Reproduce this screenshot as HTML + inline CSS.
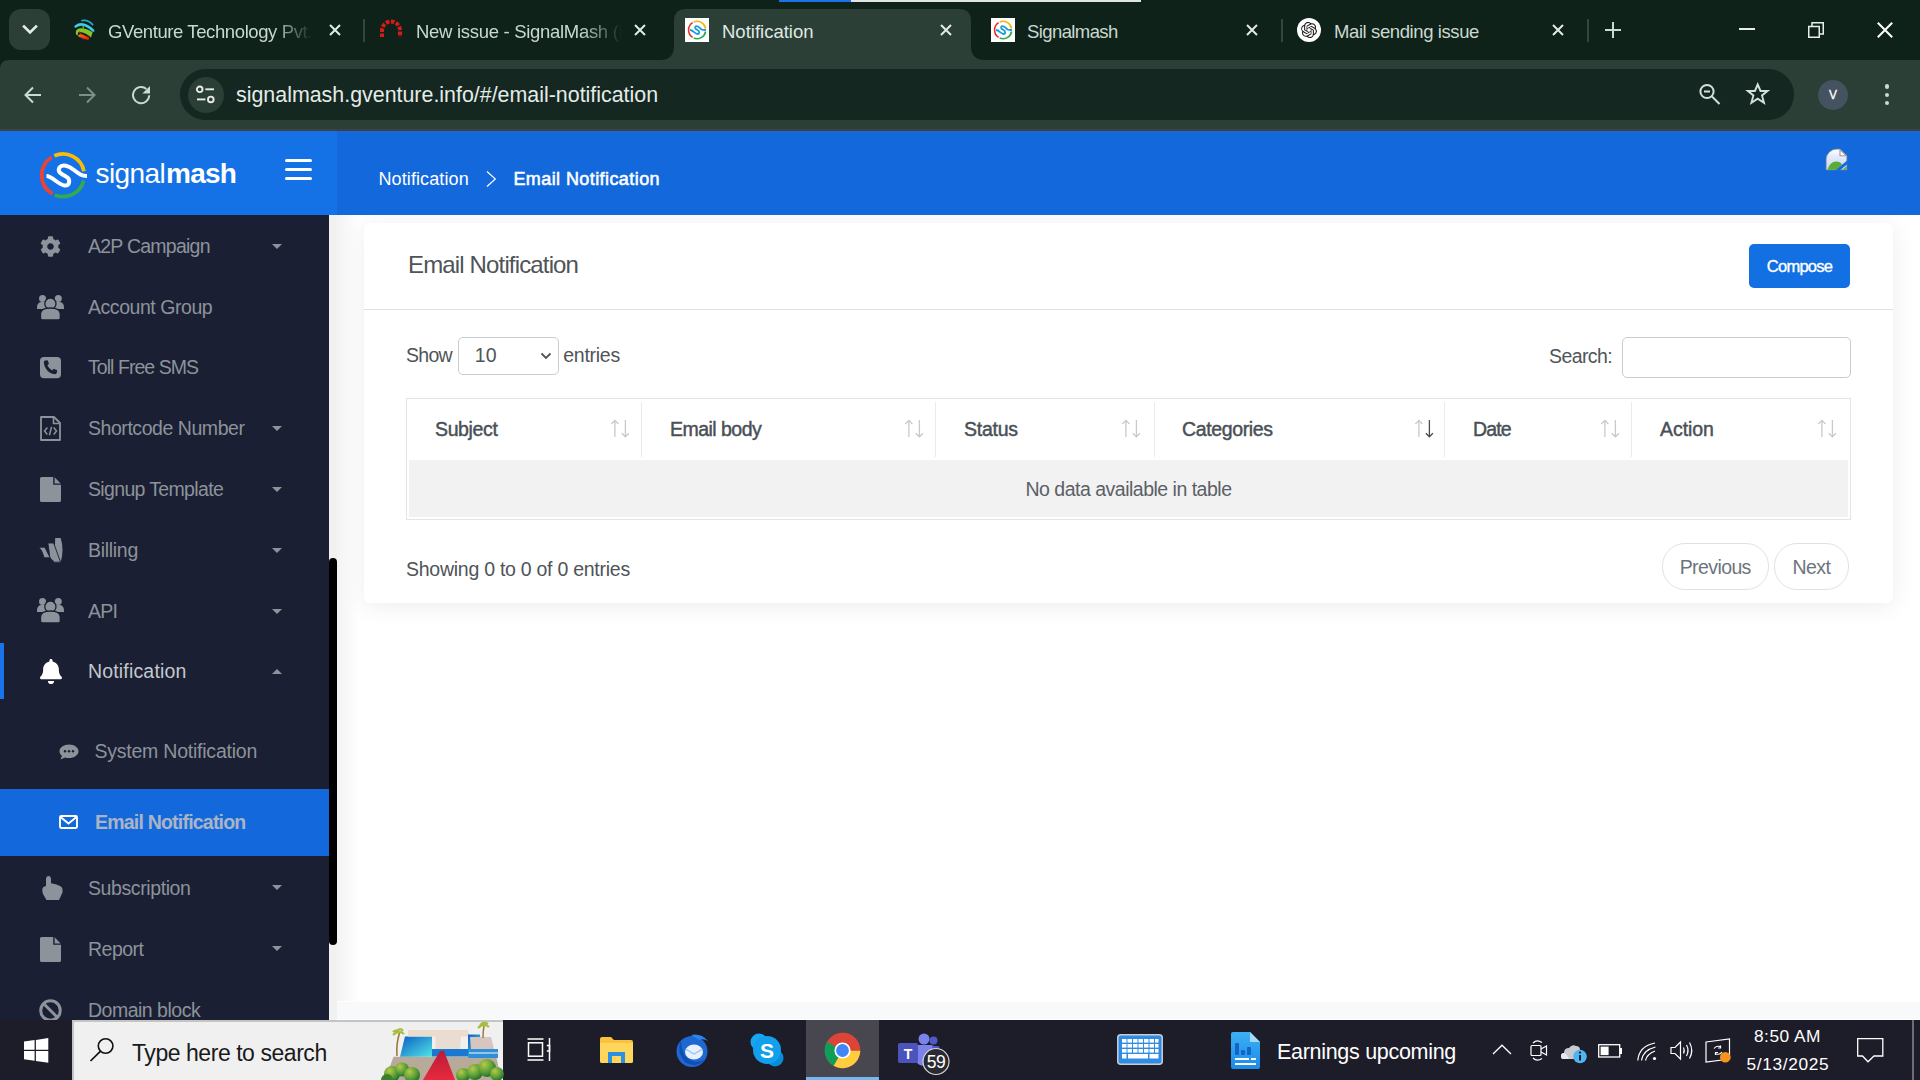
<!DOCTYPE html>
<html><head><meta charset="utf-8">
<style>
*{box-sizing:border-box;margin:0;padding:0}
html,body{width:1920px;height:1080px;overflow:hidden;background:#fff;font-family:"Liberation Sans",sans-serif}
.a{position:absolute}
.t{position:absolute;white-space:nowrap;line-height:1}
svg{position:absolute;overflow:visible}
#tabs{left:0;top:0;width:1920px;height:60px;background:#0e221a}
#toolbar{left:0;top:60px;width:1920px;height:71px;background:#2b3f37}
#hdr{left:0;top:131px;width:1920px;height:84px;background:#1368db}
#side{left:0;top:215px;width:329px;height:805px;background:#1b1f33;overflow:hidden}
#content{left:329px;top:215px;width:1591px;height:805px;background:#fff;overflow:hidden}
#task{left:0;top:1020px;width:1920px;height:60px;background:#1d1c29}
.tabtxt{font-size:18.5px;color:#dfe8e3;top:23px}
.fade{-webkit-mask-image:linear-gradient(to right,#000 80%,transparent 100%)}
.side-t{font-size:19.5px;color:#8c939a;letter-spacing:-0.6px}
.caret{width:0;height:0;border-left:5px solid transparent;border-right:5px solid transparent;border-top:5.5px solid #8c939a}
</style></head><body>
<!-- ================= TAB STRIP ================= -->
<div id="tabs" class="a">
  <div class="a" style="left:9px;top:9px;width:41px;height:41px;border-radius:12px;background:#2b3f37"></div>
  <svg style="left:0;top:0" width="60" height="60"><path d="M24 26.5 L30 32.5 L36 26.5" fill="none" stroke="#e6ede9" stroke-width="2.6" stroke-linecap="square"/></svg>
  <!-- loading bar -->
  <div class="a" style="left:779px;top:0;width:72px;height:2px;background:#1a73e8"></div>
  <div class="a" style="left:851px;top:0;width:290px;height:2px;background:#dfe5e2"></div>
  <!-- tab1 -->
  <svg style="left:70px;top:15px" width="30" height="30" viewBox="0 0 30 30">
    <defs><linearGradient id="gvo" x1="0" y1="0" x2="1" y2="0.3"><stop offset="0" stop-color="#ff7a00"/><stop offset="1" stop-color="#ff1a00"/></linearGradient></defs>
    <path d="M12 5.6 Q18 4.2 22.6 9.6" fill="none" stroke="#2aa6cf" stroke-width="1.7" stroke-linecap="round"/>
    <path d="M5.6 11.4 Q13 5.8 23.2 15.6" fill="none" stroke="#3fcbeb" stroke-width="2.5" stroke-linecap="round"/>
    <path d="M6 19.5 Q4.8 14 10 13.2 Q16 12.8 22.6 17.2 L21 22.6 Q15.5 17.6 9.5 16.8 Q7.6 17 7.8 20.5Z" fill="#84c52a"/>
    <path d="M13 10.8 L13.4 13.6" stroke="#6aa81f" stroke-width="1.4"/>
    <path d="M8 20.6 Q9.6 18.6 12.8 19.6 L19 22.4 Q19.6 24.6 17.4 24.8 Q12.5 24 8.6 21.8Z" fill="url(#gvo)"/>
    <path d="M9.4 16.4 L10.6 19" stroke="#c0392b" stroke-width="1"/>
    <path d="M10.5 22.6 L13.8 24.8" stroke="#1f2c8c" stroke-width="1.1"/>
  </svg>
  <div class="t tabtxt fade" style="color:#cad8d0;left:108px;width:205px;overflow:hidden;letter-spacing:-0.4px">GVenture Technology Pvt. Ltd.</div>
  <svg style="left:329px;top:24px" width="12" height="12"><path d="M1 1L11 11M11 1L1 11" stroke="#e2eae6" stroke-width="2"/></svg>
  <div class="a" style="left:363px;top:18.5px;width:2px;height:23px;background:#33463e"></div>
  <!-- tab2 -->
  <svg style="left:379px;top:19px" width="24" height="18" viewBox="0 0 24 18">
    <path d="M3 18 V11.5 A9 9 0 0 1 21 11.5 V18" fill="none" stroke="#d41c1c" stroke-width="4" stroke-dasharray="3.6 1.5"/>
  </svg>
  <div class="t tabtxt fade" style="color:#cad8d0;left:416px;width:206px;overflow:hidden;letter-spacing:-0.3px">New issue - SignalMash (Redmine)</div>
  <svg style="left:634px;top:24px" width="12" height="12"><path d="M1 1L11 11M11 1L1 11" stroke="#e2eae6" stroke-width="2"/></svg>
  <!-- active tab -->
  <svg style="left:660px;top:9px" width="325" height="52" viewBox="0 0 325 52">
    <path d="M0 51 Q14 51 14 37 L14 12 Q14 0 26 0 L299 0 Q311 0 311 12 L311 37 Q311 51 325 51 Z" fill="#2b3f37"/>
  </svg>
  <svg style="left:685px;top:18px" width="24" height="24" viewBox="0 0 24 24">
    <rect width="24" height="24" fill="#fff"/>
    <path d="M7.6 4.6 A8.8 8.8 0 0 0 7.6 19.4" fill="none" stroke="#e5332a" stroke-width="1.6"/>
    <path d="M8.7 3.9 A8.8 8.8 0 0 1 20.6 10.5" fill="none" stroke="#f4b400" stroke-width="1.6"/>
    <path d="M20.6 13.5 A8.8 8.8 0 0 1 8.7 20.1" fill="none" stroke="#2da94f" stroke-width="1.6"/>
    <path d="M5 12 C8 12 10 16 12.5 16 C15 16 14.5 13 12.5 12 C10.5 11 9.5 10 10.5 8.5 C12 7 15 10 16.5 11.5 C17.5 12 19 12 21 12" fill="none" stroke="#1a9be0" stroke-width="1.8"/>
  </svg>
  <div class="t tabtxt" style="left:722px">Notification</div>
  <svg style="left:940px;top:24px" width="12" height="12"><path d="M1 1L11 11M11 1L1 11" stroke="#e2eae6" stroke-width="2"/></svg>
  <!-- tab4 -->
  <svg style="left:991px;top:18px" width="24" height="24" viewBox="0 0 24 24">
    <rect width="24" height="24" fill="#fff"/>
    <path d="M7.6 4.6 A8.8 8.8 0 0 0 7.6 19.4" fill="none" stroke="#e5332a" stroke-width="1.6"/>
    <path d="M8.7 3.9 A8.8 8.8 0 0 1 20.6 10.5" fill="none" stroke="#f4b400" stroke-width="1.6"/>
    <path d="M20.6 13.5 A8.8 8.8 0 0 1 8.7 20.1" fill="none" stroke="#2da94f" stroke-width="1.6"/>
    <path d="M5 12 C8 12 10 16 12.5 16 C15 16 14.5 13 12.5 12 C10.5 11 9.5 10 10.5 8.5 C12 7 15 10 16.5 11.5 C17.5 12 19 12 21 12" fill="none" stroke="#1a9be0" stroke-width="1.8"/>
  </svg>
  <div class="t tabtxt" style="color:#cad8d0;left:1027px;letter-spacing:-0.6px">Signalmash</div>
  <svg style="left:1246px;top:24px" width="12" height="12"><path d="M1 1L11 11M11 1L1 11" stroke="#e2eae6" stroke-width="2"/></svg>
  <div class="a" style="left:1281px;top:18.5px;width:2px;height:23px;background:#33463e"></div>
  <!-- tab5 -->
  <div class="a" style="left:1297px;top:18px;width:24px;height:24px;border-radius:50%;background:#fff"></div>
  <svg style="left:1301px;top:22px" width="16" height="16" viewBox="0 0 24 24"><path fill="#1a1a1a" d="M22.2819 9.8211a5.9847 5.9847 0 0 0-.5157-4.9108 6.0462 6.0462 0 0 0-6.5098-2.9A6.0651 6.0651 0 0 0 4.9807 4.1818a5.9847 5.9847 0 0 0-3.9977 2.9 6.0462 6.0462 0 0 0 .7427 7.0966 5.98 5.98 0 0 0 .511 4.9107 6.051 6.051 0 0 0 6.5146 2.9001A5.9847 5.9847 0 0 0 13.2599 24a6.0557 6.0557 0 0 0 5.7718-4.2058 5.9894 5.9894 0 0 0 3.9977-2.9001 6.0557 6.0557 0 0 0-.7475-7.0729zm-9.022 12.6081a4.4755 4.4755 0 0 1-2.8764-1.0408l.1419-.0804 4.7783-2.7582a.7948.7948 0 0 0 .3927-.6813v-6.7369l2.02 1.1686a.071.071 0 0 1 .038.052v5.5826a4.504 4.504 0 0 1-4.4945 4.4944zm-9.6607-4.1254a4.4708 4.4708 0 0 1-.5346-3.0137l.142.0852 4.783 2.7582a.7712.7712 0 0 0 .7806 0l5.8428-3.3685v2.3324a.0804.0804 0 0 1-.0332.0615L9.74 19.9502a4.4992 4.4992 0 0 1-6.1408-1.6464zM2.3408 7.8956a4.485 4.485 0 0 1 2.3655-1.9728V11.6a.7664.7664 0 0 0 .3879.6765l5.8144 3.3543-2.0201 1.1685a.0757.0757 0 0 1-.071 0l-4.8303-2.7865A4.504 4.504 0 0 1 2.3408 7.872zm16.5963 3.8558L13.1038 8.364 15.1192 7.2a.0757.0757 0 0 1 .071 0l4.8303 2.7913a4.4944 4.4944 0 0 1-.6765 8.1042v-5.6772a.79.79 0 0 0-.407-.667zm2.0107-3.0231l-.142-.0852-4.7735-2.7818a.7759.7759 0 0 0-.7854 0L9.409 9.2297V6.8974a.0662.0662 0 0 1 .0284-.0615l4.8303-2.7866a4.4992 4.4992 0 0 1 6.6802 4.66zM8.3065 12.863l-2.02-1.1638a.0804.0804 0 0 1-.038-.0567V6.0742a4.4992 4.4992 0 0 1 7.3757-3.4537l-.142.0805L8.704 5.459a.7948.7948 0 0 0-.3927.6813zm1.0976-2.3654l2.602-1.4998 2.6069 1.4998v2.9994l-2.5974 1.4997-2.6067-1.4997Z"/></svg>
  <div class="t tabtxt" style="color:#cad8d0;left:1334px;letter-spacing:-0.4px">Mail sending issue</div>
  <svg style="left:1552px;top:24px" width="12" height="12"><path d="M1 1L11 11M11 1L1 11" stroke="#e2eae6" stroke-width="2"/></svg>
  <div class="a" style="left:1587px;top:18.5px;width:2px;height:23px;background:#33463e"></div>
  <svg style="left:1605px;top:22px" width="16" height="16"><path d="M8 0V16M0 8H16" stroke="#c8dccf" stroke-width="2"/></svg>
  <!-- window controls -->
  <div class="a" style="left:1739px;top:28px;width:16px;height:2px;background:#e8efeb"></div>
  <svg style="left:1808px;top:22px" width="16" height="16"><path d="M0.75 4.5H11.25V15.25H0.75Z M4 4.5V0.75H15.25V12H11.25" fill="none" stroke="#e8efeb" stroke-width="1.5"/></svg>
  <svg style="left:1877px;top:22px" width="16" height="16"><path d="M0.8 0.8L15.2 15.2M15.2 0.8L0.8 15.2" stroke="#fff" stroke-width="2"/></svg>
</div>
<!-- ================= TOOLBAR ================= -->
<div id="toolbar" class="a"><svg style="left:0;top:0" width="10" height="10"><path d="M0 0H9Q0 0 0 9Z" fill="#0e221a"/></svg>
  <svg style="left:24px;top:26px" width="18" height="18" viewBox="0 0 18 18"><path d="M17 9H2M9 1.5L1.5 9L9 16.5" fill="none" stroke="#c8dcd0" stroke-width="2"/></svg>
  <svg style="left:78px;top:26px" width="18" height="18" viewBox="0 0 18 18"><path d="M1 9H16M9 1.5L16.5 9L9 16.5" fill="none" stroke="#7d8f86" stroke-width="2"/></svg>
  <svg style="left:132px;top:26px" width="19" height="19" viewBox="0 0 19 19"><path d="M17.2 9.2A8.1 8.1 0 1 1 14.4 3" fill="none" stroke="#c8dcd0" stroke-width="1.9"/><path d="M18 0V7.6H10.4Z" fill="#c8dcd0"/></svg>
  <div class="a" style="left:180px;top:9px;width:1614px;height:51px;border-radius:25.5px;background:#142720"></div>
  <div class="a" style="left:187.5px;top:16.5px;width:36px;height:36px;border-radius:50%;background:#2b3f37"></div>
  <svg style="left:196px;top:25px" width="20" height="20" viewBox="0 0 20 20"><g fill="none" stroke="#e6ece9" stroke-width="1.9"><circle cx="3.7" cy="4.3" r="2.8"/><path d="M9.4 4.3H18"/><path d="M1 14.4H9.4"/><circle cx="14.8" cy="14.4" r="2.8"/></g></svg>
  <div class="t" style="left:236px;top:25.3px;font-size:21.4px;color:#e4ece8">signalmash.gventure.info/#/email-notification</div>
  <svg style="left:1699px;top:23px" width="22" height="22" viewBox="0 0 22 22"><g fill="none" stroke="#d6e0da" stroke-width="2"><circle cx="8" cy="8.5" r="6.6"/><path d="M13 13.5L20.5 21"/><path d="M5 8.5H11"/></g></svg>
  <svg style="left:1746px;top:23px" width="24" height="22" viewBox="0 0 24 22"><path d="M11.7 1.5L14.5 8H21.5L16 12.4L18 19.8L11.7 15.7L5.4 19.8L7.4 12.4L1.9 8H8.9Z" fill="none" stroke="#d6e0da" stroke-width="1.9" stroke-linejoin="miter"/></svg>
  <div class="a" style="left:1818px;top:20px;width:30px;height:30px;border-radius:50%;background:#44535f"></div>
  <div class="t" style="left:1826px;top:29.2px;font-size:12px;color:#fff;width:14px;text-align:center;-webkit-text-stroke:0.3px #fff">V</div>
  <div class="a" style="left:1884.7px;top:24.3px;width:4.6px;height:4.6px;border-radius:50%;background:#c5dccf"></div>
  <div class="a" style="left:1884.7px;top:32.7px;width:4.6px;height:4.6px;border-radius:50%;background:#c5dccf"></div>
  <div class="a" style="left:1884.7px;top:40.7px;width:4.6px;height:4.6px;border-radius:50%;background:#c5dccf"></div>
  <div class="a" style="left:0;top:69px;width:1920px;height:2px;background:#3c423f"></div>
</div>
<div id="hdr" class="a">
  <div class="a" style="left:0;top:0;width:337px;height:84px;background:#1572e6"></div>
  <svg style="left:36px;top:148px;top:17px" width="56" height="56" viewBox="0 0 56 56">
    <path d="M15.7 9.24 A21.3 21.3 0 0 0 16.67 45.93" fill="none" stroke="#ea4335" stroke-width="3.8"/>
    <path d="M18.34 7.84 A21.3 21.3 0 0 1 47.91 23.24" fill="none" stroke="#fbbc05" stroke-width="3.8"/>
    <path d="M47.67 32.45 A21.3 21.3 0 0 1 18.68 46.91" fill="none" stroke="#34a853" stroke-width="3.8"/>
    <path d="M10.5 28 C16 28 22 36.5 28.5 37.5 C34 38.5 35 31 30 28.5 C25 26 21 23.5 23.5 19.5 C26.5 15.5 33 18 38 22 C43 26 45.5 28 51 28" fill="none" stroke="#fff" stroke-width="4"/>
  </svg>
  <div class="t" style="left:95.5px;top:29.4px;font-size:28px;color:#fff;letter-spacing:-0.6px">signal<b style="font-weight:bold;letter-spacing:-0.75px;margin-left:1px">mash</b></div>
  <div class="a" style="left:285px;top:27.5px;width:27px;height:3px;border-radius:2px;background:#fff"></div>
  <div class="a" style="left:285px;top:36.5px;width:27px;height:3px;border-radius:2px;background:#fff"></div>
  <div class="a" style="left:285px;top:45.5px;width:27px;height:3px;border-radius:2px;background:#fff"></div>
  <div class="t" style="left:378.5px;top:38.5px;font-size:18px;color:#fff;letter-spacing:0.1px">Notification</div>
  <svg style="left:486px;top:40px" width="11" height="17"><path d="M1 0.5L9.3 8L1 15.5" fill="none" stroke="#fff" stroke-width="1.2"/></svg>
  <div class="t" style="left:513.4px;top:38.5px;font-size:18px;color:#fff;-webkit-text-stroke:0.55px #fff;letter-spacing:0.42px">Email Notification</div>
  <svg style="left:1826px;top:18.2px" width="21" height="21" viewBox="0 0 21 21">
    <defs><linearGradient id="bim" x1="0" y1="0" x2="0" y2="1"><stop offset="0" stop-color="#ffffff"/><stop offset="0.35" stop-color="#e4ecfb"/><stop offset="1" stop-color="#c5d4ee"/></linearGradient></defs>
    <path d="M0.3 20.7V10.5A10.2 10.2 0 0 1 10.5 0.3H14L20.7 7V20.7Z" fill="url(#bim)" stroke="#b9a98f" stroke-width="0.6"/>
    <path d="M14 0.5V6.8H20.5Z" fill="#fdfdfd" stroke="#9a9a9a" stroke-width="1.1"/>
    <path d="M1.5 20.7Q4 12.8 10 12.6Q14.5 12.6 16 15.5L10.5 20.7Z" fill="#5aac36"/>
    <path d="M16.4 20.7L20.7 17V20.7Z" fill="#6aa84f"/>
    <path d="M9.5 21.2L21.2 11.6V15.2L14 21.2Z" fill="#1368db"/>
  </svg>
</div>
<div id="side" class="a"><svg style="left:40px;top:21px" width="21" height="21" viewBox="0 0 512 512"><path fill="#8c939a" d="M487.4 315.7l-42.6-24.6c4.3-23.2 4.3-47 0-70.2l42.6-24.6c4.9-2.8 7.1-8.6 5.5-14-11.1-35.6-30-67.8-54.7-94.6-3.8-4.1-10-5.1-14.8-2.3L380.8 110c-17.9-15.4-38.5-27.3-60.8-35.1V25.8c0-5.6-3.9-10.5-9.4-11.7-36.7-8.2-74.3-7.8-109.2 0-5.5 1.2-9.4 6.1-9.4 11.7V75c-22.2 7.9-42.8 19.8-60.8 35.1L88.7 85.5c-4.9-2.8-11-1.9-14.8 2.3-24.7 26.7-43.6 58.9-54.7 94.6-1.7 5.4.6 11.2 5.5 14L67.3 221c-4.3 23.2-4.3 47 0 70.2l-42.6 24.6c-4.9 2.8-7.1 8.6-5.5 14 11.1 35.6 30 67.8 54.7 94.6 3.8 4.1 10 5.1 14.8 2.3l42.6-24.6c17.9 15.4 38.5 27.3 60.8 35.1v49.2c0 5.6 3.9 10.5 9.4 11.7 36.7 8.2 74.3 7.8 109.2 0 5.5-1.2 9.4-6.1 9.4-11.7v-49.2c22.2-7.9 42.8-19.8 60.8-35.1l42.6 24.6c4.9 2.8 11 1.9 14.8-2.3 24.7-26.7 43.6-58.9 54.7-94.6 1.5-5.5-.7-11.3-5.6-14.1zM256 336c-44.1 0-80-35.9-80-80s35.9-80 80-80 80 35.9 80 80-35.9 80-80 80z"/></svg><div class="t side-t" style="left:88px;top:22.29px;font-size:19.5px;letter-spacing:-0.75px">A2P Campaign</div><div class="a caret" style="left:272px;top:28.5px"></div><svg style="left:37px;top:80px" width="27" height="25" viewBox="0 0 27 25">
<circle cx="5.5" cy="3.5" r="3.5" fill="#8c939a"/><circle cx="21.3" cy="3.5" r="3.5" fill="#8c939a"/>
<path d="M0 12.5Q0 7 5 7H7Q11 7 11 12.5V14H0Z" fill="#8c939a"/><path d="M16 12.5Q16 7 20 7H22Q27 7 27 12.5V14H16Z" fill="#8c939a"/>
<circle cx="13.4" cy="8.7" r="5.6" fill="#8c939a" stroke="#1b1f33" stroke-width="1.3"/>
<path d="M3.5 19Q3.5 13 13.4 13Q23.3 13 23.3 19V23Q23.3 25 21.3 25H5.5Q3.5 25 3.5 23Z" fill="#8c939a" stroke="#1b1f33" stroke-width="1.3"/></svg><div class="t side-t" style="left:88px;top:83.29px;font-size:19.5px;letter-spacing:-0.45px">Account Group</div><svg style="left:40px;top:141.7px" width="21" height="21.3" viewBox="0 0 21 21.3"><rect x="0" y="0" width="21" height="21.3" rx="4" fill="#8c939a"/><path d="M5.2 3.6L7.6 3.2L9 6.8L7.4 8.2Q8.6 11.4 12.2 13.4L13.6 11.8L17.2 13.2L16.8 15.8Q16.5 17.2 15 17.2Q9 16.8 5.5 11Q3.8 8 3.8 5Q3.8 3.9 5.2 3.6Z" fill="#1b1f33"/></svg><div class="t side-t" style="left:88px;top:142.99px;font-size:19.5px;letter-spacing:-0.95px">Toll Free SMS</div><svg style="left:40px;top:201.3px" width="21" height="25" viewBox="0 0 21 25"><path d="M1 1H14L20 7V24H1Z" fill="none" stroke="#8c939a" stroke-width="1.8" stroke-linejoin="round"/><path d="M13.5 1.5V7.5H19.5" fill="none" stroke="#8c939a" stroke-width="1.6"/><path d="M7.3 11.5L4.5 15L7.3 18.5M13.7 11.5L16.5 15L13.7 18.5M11.6 10.8L9.4 19.2" fill="none" stroke="#8c939a" stroke-width="1.5"/></svg><div class="t side-t" style="left:88px;top:204.19px;font-size:19.5px;letter-spacing:-0.45px">Shortcode Number</div><div class="a caret" style="left:272px;top:210.8px"></div><svg style="left:40px;top:262px" width="21" height="25" viewBox="0 0 21 25"><path d="M1.5 0H13.2V7.8H21V23.5Q21 25 19.5 25H1.5Q0 25 0 23.5V1.5Q0 0 1.5 0Z" fill="#8c939a"/><path d="M14.6 0.3L20.7 6.4H14.6Z" fill="#8c939a"/></svg><div class="t side-t" style="left:88px;top:265.19px;font-size:19.5px;letter-spacing:-0.65px">Signup Template</div><div class="a caret" style="left:272px;top:271.8px"></div><svg style="left:38px;top:537px;top:322px" width="27" height="27" viewBox="0 0 27 27">
<path d="M17.2 1L22.7 1Q26.3 13 22.7 25.2L16.4 25.2Z" fill="#8c939a"/>
<path d="M9.8 6L15.7 6L22.5 25.2L16.5 25.2L11.8 20.8Q11 12 9.8 6Z" fill="#8c939a" stroke="#1b1f33" stroke-width="0.9"/>
<path d="M0.9 10.2L6.8 10.2L12.2 20.8L6.2 20.8Q4 13 0.9 10.2Z" fill="#8c939a" stroke="#1b1f33" stroke-width="0.9"/></svg><div class="t side-t" style="left:88px;top:326.39px;font-size:19.5px;letter-spacing:-0.3px">Billing</div><div class="a caret" style="left:272px;top:332.9px"></div><svg style="left:37px;top:382.7px" width="27" height="25" viewBox="0 0 27 25">
<circle cx="5.5" cy="3.5" r="3.5" fill="#8c939a"/><circle cx="21.3" cy="3.5" r="3.5" fill="#8c939a"/>
<path d="M0 12.5Q0 7 5 7H7Q11 7 11 12.5V14H0Z" fill="#8c939a"/><path d="M16 12.5Q16 7 20 7H22Q27 7 27 12.5V14H16Z" fill="#8c939a"/>
<circle cx="13.4" cy="8.7" r="5.6" fill="#8c939a" stroke="#1b1f33" stroke-width="1.3"/>
<path d="M3.5 19Q3.5 13 13.4 13Q23.3 13 23.3 19V23Q23.3 25 21.3 25H5.5Q3.5 25 3.5 23Z" fill="#8c939a" stroke="#1b1f33" stroke-width="1.3"/></svg><div class="t side-t" style="left:88px;top:386.99px;font-size:19.5px;letter-spacing:-0.8px">API</div><div class="a caret" style="left:272px;top:393.5px"></div><div class="a" style="left:0;top:428px;width:4px;height:56px;background:#1a73e8"></div><svg style="left:40px;top:443.7px" width="22" height="25" viewBox="0 0 448 512" preserveAspectRatio="none"><path fill="#fff" d="M224 512c35.32 0 63.97-28.65 63.97-64H160.03c0 35.35 28.65 64 63.97 64zm215.39-149.71c-19.32-20.76-55.47-51.99-55.47-154.29 0-77.7-54.48-139.9-127.94-155.16V32c0-17.67-14.32-32-31.98-32s-31.98 14.33-31.98 32v20.84C118.56 68.1 64.08 130.3 64.08 208c0 102.3-36.15 133.53-55.47 154.29-6 6.45-8.66 14.16-8.61 21.71.11 16.4 12.98 32 32.1 32h383.8c19.12 0 32-15.6 32.1-32 .05-7.55-2.61-15.27-8.61-21.71z"/></svg><div class="t side-t" style="left:88px;top:447.29px;font-size:19.5px;color:#c4c7cd;letter-spacing:0.17px">Notification</div><div class="a caret" style="left:272px;top:453.5px;border-top:none;border-bottom:5.5px solid #8c939a"></div><svg style="left:58.5px;top:528.5px" width="20" height="16" viewBox="0 0 20 16"><path d="M10 0.5C4.8 0.5 0.5 3.5 0.5 7.2c0 1.8 1 3.4 2.5 4.6L1.5 15.5 6 13.4c1.2 .4 2.6 .6 4 .6 5.2 0 9.5-3 9.5-6.8S15.2 0.5 10 0.5z" fill="#8c939a"/><circle cx="6" cy="7.2" r="1.2" fill="#1b1f33"/><circle cx="10" cy="7.2" r="1.2" fill="#1b1f33"/><circle cx="14" cy="7.2" r="1.2" fill="#1b1f33"/></svg><div class="t side-t" style="left:94.5px;top:527.29px;font-size:19.5px;letter-spacing:-0.23px">System Notification</div><div class="a" style="left:0;top:574px;width:329px;height:67px;background:#1369db"></div><svg style="left:59px;top:600px" width="19" height="14" viewBox="0 0 19 14"><rect x="1" y="1" width="17" height="12" rx="1.2" fill="none" stroke="#fff" stroke-width="1.9"/><path d="M1.5 2L9.5 8.5L17.5 2" fill="none" stroke="#fff" stroke-width="1.9"/></svg><div class="t side-t" style="left:95px;top:597.89px;font-size:19.5px;font-weight:bold;color:#abb4c6;letter-spacing:-0.79px">Email Notification</div><svg style="left:42px;top:660px" width="21" height="26" viewBox="0 0 21 26"><path d="M4 4.5Q4 1 6.5 1Q9 1 9 4.5V8.3Q14 9 17.5 10.8Q20.5 12 20.5 14.8V17.5L17 25H4.5L1 19Q0.3 17.5 0.3 14.8Q0.3 11.5 4 11Z" fill="#8c939a"/></svg><div class="t side-t" style="left:88px;top:664.09px;font-size:19.5px;letter-spacing:-0.4px">Subscription</div><div class="a caret" style="left:272px;top:670.1px"></div><svg style="left:40px;top:722px" width="21" height="25" viewBox="0 0 21 25"><path d="M1.5 0H13.2V7.8H21V23.5Q21 25 19.5 25H1.5Q0 25 0 23.5V1.5Q0 0 1.5 0Z" fill="#8c939a"/><path d="M14.6 0.3L20.7 6.4H14.6Z" fill="#8c939a"/></svg><div class="t side-t" style="left:88px;top:725.29px;font-size:19.5px;letter-spacing:-0.5px">Report</div><div class="a caret" style="left:272px;top:730.5px"></div><svg style="left:39px;top:783.5px" width="23" height="23" viewBox="0 0 23 23"><circle cx="11.5" cy="11.5" r="9.8" fill="none" stroke="#8c939a" stroke-width="3"/><path d="M4.5 4.5L18.5 18.5" stroke="#8c939a" stroke-width="3"/></svg><div class="t side-t" style="left:88px;top:785.99px;font-size:19.5px;letter-spacing:-0.5px">Domain block</div></div>
<div id="content" class="a"><div class="a" style="left:0;top:0;width:8px;height:805px;background:#f1f1f1"></div><div class="a" style="left:8px;top:0;width:22px;height:786px;background:linear-gradient(to right,#f3f3f3,rgba(255,255,255,0))"></div><div class="a" style="left:0;top:343px;width:8px;height:387px;border-radius:4px;background:#000"></div><div class="a" style="left:8px;top:786.5px;width:1583px;height:17.5px;background:#f8f9fb"></div><div class="a" style="left:35px;top:8px;width:1529px;height:380px;background:#fff;border-radius:6px;box-shadow:0 3px 24px rgba(0,0,0,0.075)"></div><div class="t" style="left:79px;top:37.5px;font-size:24px;color:#4f5458;letter-spacing:-0.85px">Email Notification</div><div class="a" style="left:1420px;top:29px;width:101px;height:43.5px;border-radius:5px;background:#1370e3"></div><div class="t" style="left:1420px;top:42.5px;width:101px;text-align:center;font-size:16.5px;color:#fff;-webkit-text-stroke:0.35px #fff;letter-spacing:-0.75px">Compose</div><div class="a" style="left:35px;top:94px;width:1529px;height:1px;background:#dfe0e2"></div><div class="t" style="left:77px;top:130.7px;font-size:19.5px;color:#4f5458;letter-spacing:-0.7px">Show</div><div class="a" style="left:129px;top:122px;width:101px;height:38px;border:1.5px solid #c9cbce;border-radius:5px;background:#fff"></div><div class="t" style="left:145.8px;top:131.2px;font-size:19.5px;color:#4f5458">10</div><svg style="left:211px;top:137px" width="12" height="8"><path d="M1.5 1.5L6 6L10.5 1.5" fill="none" stroke="#4f5458" stroke-width="1.8"/></svg><div class="t" style="left:234.3px;top:130.7px;font-size:19.5px;color:#4f5458;letter-spacing:-0.28px">entries</div><div class="t" style="left:1220px;top:132px;font-size:19.5px;color:#4f5458;letter-spacing:-0.6px">Search:</div><div class="a" style="left:1293px;top:122px;width:229px;height:41px;border:1.5px solid #c9cbce;border-radius:5px;background:#fff"></div><div class="a" style="left:77px;top:183px;width:1445px;height:122px;border:1.5px solid #e3e4e6;background:#fff"></div><div class="a" style="left:80px;top:245px;width:1439px;height:57px;background:#f2f2f2"></div><div class="a" style="left:312px;top:187px;width:1.2px;height:55px;background:#e9ebee"></div><div class="a" style="left:606px;top:187px;width:1.2px;height:55px;background:#e9ebee"></div><div class="a" style="left:824.5px;top:187px;width:1.2px;height:55px;background:#e9ebee"></div><div class="a" style="left:1115px;top:187px;width:1.2px;height:55px;background:#e9ebee"></div><div class="a" style="left:1302px;top:187px;width:1.2px;height:55px;background:#e9ebee"></div><div class="t" style="left:106px;top:204.8px;font-size:19.5px;color:#495057;-webkit-text-stroke:0.45px #495057;letter-spacing:-0.37px">Subject</div><div class="t" style="left:341px;top:204.8px;font-size:19.5px;color:#495057;-webkit-text-stroke:0.45px #495057;letter-spacing:-0.53px">Email body</div><div class="t" style="left:635px;top:204.8px;font-size:19.5px;color:#495057;-webkit-text-stroke:0.45px #495057;letter-spacing:-0.26px">Status</div><div class="t" style="left:853px;top:204.8px;font-size:19.5px;color:#495057;-webkit-text-stroke:0.45px #495057;letter-spacing:-0.36px">Categories</div><div class="t" style="left:1144px;top:204.8px;font-size:19.5px;color:#495057;-webkit-text-stroke:0.45px #495057;letter-spacing:-0.83px">Date</div><div class="t" style="left:1331px;top:204.8px;font-size:19.5px;color:#495057;-webkit-text-stroke:0.45px #495057;letter-spacing:-0.06px">Action</div><svg style="left:282.0px;top:204px" width="20" height="20" viewBox="0 0 20 20"><path d="M3.9 1.6V18M0.4 5L3.9 1.4L7.4 5" fill="none" stroke="#c6c9cd" stroke-width="1.3"/><path d="M14.4 1V17.6M10.9 14.2L14.4 17.8L17.9 14.2" fill="none" stroke="#c6c9cd" stroke-width="1.3"/></svg><svg style="left:576.0px;top:204px" width="20" height="20" viewBox="0 0 20 20"><path d="M3.9 1.6V18M0.4 5L3.9 1.4L7.4 5" fill="none" stroke="#c6c9cd" stroke-width="1.3"/><path d="M14.4 1V17.6M10.9 14.2L14.4 17.8L17.9 14.2" fill="none" stroke="#c6c9cd" stroke-width="1.3"/></svg><svg style="left:793.0px;top:204px" width="20" height="20" viewBox="0 0 20 20"><path d="M3.9 1.6V18M0.4 5L3.9 1.4L7.4 5" fill="none" stroke="#c6c9cd" stroke-width="1.3"/><path d="M14.4 1V17.6M10.9 14.2L14.4 17.8L17.9 14.2" fill="none" stroke="#c6c9cd" stroke-width="1.3"/></svg><svg style="left:1086.0px;top:204px" width="20" height="20" viewBox="0 0 20 20"><path d="M3.9 1.6V18M0.4 5L3.9 1.4L7.4 5" fill="none" stroke="#c6c9cd" stroke-width="1.3"/><path d="M14.4 1V17.6M10.9 14.2L14.4 17.8L17.9 14.2" fill="none" stroke="#4a4d52" stroke-width="1.3"/></svg><svg style="left:1272.0px;top:204px" width="20" height="20" viewBox="0 0 20 20"><path d="M3.9 1.6V18M0.4 5L3.9 1.4L7.4 5" fill="none" stroke="#c6c9cd" stroke-width="1.3"/><path d="M14.4 1V17.6M10.9 14.2L14.4 17.8L17.9 14.2" fill="none" stroke="#c6c9cd" stroke-width="1.3"/></svg><svg style="left:1489.0px;top:204px" width="20" height="20" viewBox="0 0 20 20"><path d="M3.9 1.6V18M0.4 5L3.9 1.4L7.4 5" fill="none" stroke="#c6c9cd" stroke-width="1.3"/><path d="M14.4 1V17.6M10.9 14.2L14.4 17.8L17.9 14.2" fill="none" stroke="#c6c9cd" stroke-width="1.3"/></svg><div class="t" style="left:77px;top:265px;width:1445px;text-align:center;font-size:19.5px;color:#5b6066;letter-spacing:-0.5px">No data available in table</div><div class="t" style="left:77px;top:344.8px;font-size:19.5px;color:#4f5458;letter-spacing:-0.26px">Showing 0 to 0 of 0 entries</div><div class="a" style="left:1333px;top:328px;width:106.5px;height:46.5px;border:1.5px solid #dee2e6;border-radius:23px"></div><div class="t" style="left:1333px;top:343px;width:106.5px;text-align:center;font-size:19.5px;color:#6c757d;letter-spacing:-0.6px">Previous</div><div class="a" style="left:1445px;top:328px;width:75px;height:46.5px;border:1.5px solid #dee2e6;border-radius:23px"></div><div class="t" style="left:1445px;top:343px;width:75px;text-align:center;font-size:19.5px;color:#6c757d;letter-spacing:-0.5px">Next</div></div>
<div id="task" class="a"><svg style="left:24px;top:17.5px" width="25" height="25" viewBox="0 0 25 25"><path d="M0 3.6L10.6 2.1V11.7H0Z M11.9 1.9L24.3 0V11.7H11.9Z M0 13H10.6V22.7L0 21.3Z M11.9 13H24.3V24.8L11.9 22.9Z" fill="#fff"/></svg><div class="a" style="left:72px;top:0;width:431px;height:60px;background:#f0f0f0;border-top:2px solid #c4c4c4;border-left:2px solid #c4c4c4"></div><svg style="left:89px;top:17px" width="26" height="26" viewBox="0 0 26 26"><circle cx="16.6" cy="9" r="7.3" fill="none" stroke="#111" stroke-width="1.6"/><path d="M11.3 14.3L1.5 24" stroke="#111" stroke-width="1.7"/></svg><div class="t" style="left:132px;top:21.6px;font-size:23px;color:#1a1a1a;letter-spacing:-0.45px">Type here to search</div><svg style="left:383px;top:2px" width="120" height="58" viewBox="0 0 120 58">
<defs><linearGradient id="bl" x1="0" y1="0" x2="1" y2="1"><stop offset="0" stop-color="#0a5fc2"/><stop offset="1" stop-color="#52e3e8"/></linearGradient>
<linearGradient id="rc" x1="0" y1="0" x2="0" y2="1"><stop offset="0" stop-color="#b81d3a"/><stop offset="1" stop-color="#e8293d"/></linearGradient>
<radialGradient id="bu" cx="0.35" cy="0.3" r="0.8"><stop offset="0" stop-color="#b9c94a"/><stop offset="0.6" stop-color="#4f9a35"/><stop offset="1" stop-color="#1f5a2a"/></radialGradient></defs>
<path d="M10.5 34.7L113.4 34.7L118 58H2Z" fill="#b7aa99"/>
<path d="M22 14.4L49 14.4L49 34.7L17 34.7Z" fill="url(#bl)"/>
<path d="M25 8L85 8L87 14.4L25 14.4Z" fill="#ecdbcf"/>
<path d="M52.5 14L78 14L77 27L52.5 27Z" fill="#e9dcd3"/>
<path d="M49 27L85 27L85 34.5L49 34.5Z" fill="#1a78d0"/>
<path d="M85 12.5L97 12.5L99 36L85 36Z" fill="url(#bl)"/>
<path d="M87 15L108 15L111 27L88 27Z" fill="#d6c6bf"/>
<path d="M86 27L115 27L115 36L86 36Z" fill="#2c8fdc"/>
<path d="M86 31L115 31" stroke="#e5e5e5" stroke-width="1.2"/>
<path d="M57 29L61 29L72 58H40Z" fill="url(#rc)"/>
<circle cx="9" cy="52" r="8" fill="url(#bu)"/><circle cx="19" cy="47.5" r="7" fill="url(#bu)"/><circle cx="29" cy="53" r="8" fill="url(#bu)"/><circle cx="4" cy="58" r="6" fill="#3e7f2d"/>
<circle cx="80" cy="53" r="7" fill="url(#bu)"/><circle cx="92" cy="50" r="8" fill="url(#bu)"/><circle cx="104" cy="46" r="9" fill="url(#bu)"/><circle cx="114" cy="52" r="7" fill="url(#bu)"/>
<path d="M14 34Q13 22 16.5 11" stroke="#9b7b3c" stroke-width="1.6" fill="none"/><path d="M10 13Q16 7 21 12M12 10Q17 5 20 9M16 10Q13 7 10 10" stroke="#a9bd3c" stroke-width="2.2" fill="none"/>
<path d="M100 16Q100 9 101 4" stroke="#9b7b3c" stroke-width="1.5" fill="none"/><path d="M95 6Q101 0 106 5M97 3Q101 -1 105 2" stroke="#a9bd3c" stroke-width="2.2" fill="none"/>
</svg><svg style="left:527px;top:18px" width="24" height="23" viewBox="0 0 24 23"><g fill="none" stroke="#fff" stroke-width="1.5"><path d="M0.5 1H16.5M0.5 22H16.5"/><rect x="1.5" y="4.8" width="14" height="13.4"/><path d="M22.5 0V23"/><path d="M19.8 7.5H22.5V13H19.8"/></g></svg><svg style="left:600px;top:17px" width="33" height="26" viewBox="0 0 33 26">
<path d="M0 2Q0 0 2 0H11L14 3H31Q33 3 33 5V24Q33 26 31 26H2Q0 26 0 24Z" fill="#f8c33a"/>
<path d="M0 6H33V24Q33 26 31 26H2Q0 26 0 24Z" fill="#ffd65c"/>
<path d="M8 15H25V26H21V19H12V26H8Z" fill="#2d8fe0"/></svg><svg style="left:673px;top:12px" width="38" height="36" viewBox="0 0 38 36">
<circle cx="19" cy="19.5" r="15.5" fill="#1f68d1"/>
<path d="M8 8Q3 20 12 30Q22 37 32 28Q20 33 12 24Q8 17 8 8Z" fill="#0e4fb0"/>
<path d="M18 3Q28 1 35 9Q30 6 26 8Z" fill="#2a85f0"/>
<ellipse cx="21" cy="20" rx="9" ry="7.5" fill="#e7f0fb"/>
<path d="M12.5 17L21 22L29.5 17" fill="none" stroke="#9cc2ee" stroke-width="1.3"/></svg><svg style="left:750px;top:13px" width="34" height="34" viewBox="0 0 34 34">
<circle cx="9" cy="9" r="8.5" fill="#18a6f0"/><circle cx="25" cy="25" r="8.5" fill="#0a8cd8"/><circle cx="17" cy="17" r="14" fill="#12a0ec"/>
<text x="17" y="25" font-family="Liberation Sans" font-weight="bold" font-size="21" fill="#fff" text-anchor="middle">S</text></svg><div class="a" style="left:806px;top:0;width:73px;height:60px;background:#48474f"></div><div class="a" style="left:806px;top:57px;width:73px;height:3px;background:#77b8ec"></div><svg style="left:823.5px;top:11.5px" width="37" height="37" viewBox="0 0 48 48">
<circle cx="24" cy="24" r="23" fill="#db4437"/>
<path d="M24 24L4.1 12.5A23 23 0 0 0 12.5 43.9Z" fill="#0f9d58"/>
<path d="M24 24L4.1 12.5A23 23 0 0 0 12.5 43.9L24 24Z" fill="#0f9d58"/>
<path d="M24 24L12.5 43.9A23 23 0 0 0 47 24Z" fill="#ffcd40"/>
<path d="M24 24L47 24A23 23 0 0 0 24 1H24L4.1 12.5Z" fill="#db4437"/>
<circle cx="24" cy="24" r="10.5" fill="#fff"/><circle cx="24" cy="24" r="8.3" fill="#4285f4"/></svg><svg style="left:898px;top:13px" width="55" height="42" viewBox="0 0 55 42">
<circle cx="26" cy="6" r="5.5" fill="#7b83eb"/><circle cx="35.5" cy="7.5" r="4" fill="#5059c9"/>
<path d="M17 12H33Q36 12 36 15V26Q36 33 27 33Q18 33 18 26Z" fill="#7b83eb"/>
<path d="M34 13H40Q41.5 13 41.5 15V23Q41.5 28 36 28Z" fill="#5059c9"/>
<rect x="0" y="10" width="20" height="20" rx="2" fill="#4b53bc"/>
<text x="10" y="25.5" font-family="Liberation Sans" font-weight="bold" font-size="14" fill="#fff" text-anchor="middle">T</text>
<circle cx="38" cy="28.5" r="13" fill="#2a2a33" stroke="#d8d8d8" stroke-width="1.2"/>
<text x="38" y="35" font-family="Liberation Sans" font-size="17.5" fill="#fff" text-anchor="middle" letter-spacing="-0.5">59</text></svg><svg style="left:1117px;top:14px" width="46" height="31" viewBox="0 0 46 31">
<rect x="0.75" y="0.75" width="44.5" height="29.5" rx="3" fill="#2f8ce6" stroke="#c9cdd2" stroke-width="1.5"/>
<g fill="#fff">
<rect x="5" y="5" width="4.5" height="3.6"/><rect x="10.5" y="5" width="4.5" height="3.6"/><rect x="16" y="5" width="4.5" height="3.6"/><rect x="21.5" y="5" width="4.5" height="3.6"/><rect x="27" y="5" width="4.5" height="3.6"/><rect x="32.5" y="5" width="4.5" height="3.6"/><rect x="38" y="5" width="3.5" height="3.6"/>
<rect x="5" y="10" width="4.5" height="3.6"/><rect x="10.5" y="10" width="4.5" height="3.6"/><rect x="16" y="10" width="4.5" height="3.6"/><rect x="21.5" y="10" width="4.5" height="3.6"/><rect x="27" y="10" width="4.5" height="3.6"/><rect x="32.5" y="10" width="4.5" height="3.6"/><rect x="38" y="10" width="3.5" height="3.6"/>
<rect x="5" y="15" width="4.5" height="3.6"/><rect x="10.5" y="15" width="4.5" height="3.6"/><rect x="16" y="15" width="4.5" height="3.6"/><rect x="21.5" y="15" width="4.5" height="3.6"/><rect x="27" y="15" width="4.5" height="3.6"/><rect x="32.5" y="15" width="4.5" height="3.6"/><rect x="38" y="15" width="3.5" height="3.6"/>
<rect x="5" y="20" width="4.5" height="4.5"/><rect x="11" y="20" width="20" height="4.5"/><rect x="32.5" y="20" width="9" height="4.5"/></g></svg><svg style="left:1231px;top:11.5px" width="29" height="37" viewBox="0 0 29 37">
<defs><linearGradient id="eg" x1="0" y1="0" x2="0" y2="1"><stop offset="0" stop-color="#3db0f5"/><stop offset="1" stop-color="#1a8be8"/></linearGradient></defs>
<path d="M2 0H19L29 10V35Q29 37 27 37H2Q0 37 0 35V2Q0 0 2 0Z" fill="url(#eg)"/>
<path d="M19 0V10H29Z" fill="#a5d8fb"/>
<rect x="4" y="11" width="4" height="12" rx="1" fill="#1265c4"/><rect x="10" y="18" width="4" height="5" rx="1" fill="#1265c4"/><rect x="16" y="15" width="4" height="8" rx="1" fill="#1265c4"/>
<rect x="4" y="26" width="14" height="2" fill="#fff"/><rect x="20" y="26" width="5" height="2" fill="#fff"/><rect x="4" y="31" width="21" height="2" fill="#fff"/></svg><div class="t" style="left:1277px;top:22.4px;font-size:21.5px;color:#fff;letter-spacing:-0.3px">Earnings upcoming</div><svg style="left:1492px;top:24px" width="20" height="11" viewBox="0 0 20 11"><path d="M1 10L10 1.2L19 10" fill="none" stroke="#fff" stroke-width="1.3"/></svg><svg style="left:1530px;top:18.5px" width="18" height="23" viewBox="0 0 18 23"><g fill="none" stroke="#fff" stroke-width="1.2">
<path d="M3 4Q7 0 12 3.5M3 19Q7 23 12 19.5"/><rect x="1" y="6.5" width="10" height="10" rx="1"/><path d="M11 10L16.5 7V16L11 13"/></g></svg><svg style="left:1561px;top:21px" width="27" height="23" viewBox="0 0 27 23">
<path d="M2 18Q0 18 0 15Q0 12 3 12Q3 7 8 7Q11 3 15 5Q19 5 19 9Q22 10 22 14Q22 18 18 18Z" fill="#c9c9d0"/>
<path d="M2 18Q0 18 0 15Q0 12 3 12Q6 13 8 18Z" fill="#e8e8ee"/>
<circle cx="19" cy="15.5" r="6.8" fill="#4fb4f2"/><rect x="18.1" y="14" width="1.9" height="5.5" fill="#1b1b24"/><circle cx="19" cy="11.6" r="1.1" fill="#1b1b24"/></svg><svg style="left:1598px;top:24px" width="25" height="14" viewBox="0 0 25 14"><rect x="0.7" y="0.7" width="21" height="12.3" fill="none" stroke="#fff" stroke-width="1.3"/><rect x="2.6" y="2.6" width="8" height="8.5" fill="#fff"/><rect x="22" y="4" width="2" height="6" fill="#fff"/></svg><svg style="left:1637px;top:21.5px" width="21" height="19" viewBox="0 0 21 19"><g fill="none" stroke="#fff" stroke-width="1.2">
<path d="M0.8 18.5Q2 4 18 1"/><path d="M4.5 18.5Q6 8 18.5 5"/><path d="M8.5 18.5Q10 12 18 9"/></g><circle cx="17.5" cy="16.5" r="1.6" fill="#fff"/></svg><svg style="left:1670px;top:21px" width="24" height="19" viewBox="0 0 24 19"><g fill="none" stroke="#fff" stroke-width="1.2">
<path d="M1 6.5H5L10.5 1V18L5 12.5H1Z"/><path d="M13.5 6.5Q15 9.5 13.5 12.5"/><path d="M16.5 4Q19.5 9.5 16.5 15"/><path d="M19.5 1.5Q24 9.5 19.5 17.5"/></g></svg><svg style="left:1705px;top:17.5px" width="27" height="26" viewBox="0 0 27 26"><g fill="none" stroke="#fff" stroke-width="1.2">
<path d="M1 4L24.5 1V21L1 24Z"/><path d="M9 10.5Q11 7.5 15 8.5L16 9.5M15.5 7.5V10H13"/><path d="M17 14Q15 17 11 16L10 15M10.5 17V14.5H13"/></g><circle cx="20.3" cy="19.2" r="5.3" fill="#f7941d"/></svg><div class="t" style="left:1754px;top:8.3px;font-size:17.3px;color:#fff;letter-spacing:0.5px">8:50 AM</div><div class="t" style="left:1746.5px;top:36.2px;font-size:17.3px;color:#fff;letter-spacing:0.65px">5/13/2025</div><svg style="left:1857px;top:18px" width="27" height="25" viewBox="0 0 27 25"><path d="M0.7 0.7H25.8V18H17L11 23.8L5.5 18H0.7Z" fill="none" stroke="#fff" stroke-width="1.3"/></svg><div class="a" style="left:1912px;top:0;width:2px;height:60px;background:#6d6c75"></div></div>
</body></html>
